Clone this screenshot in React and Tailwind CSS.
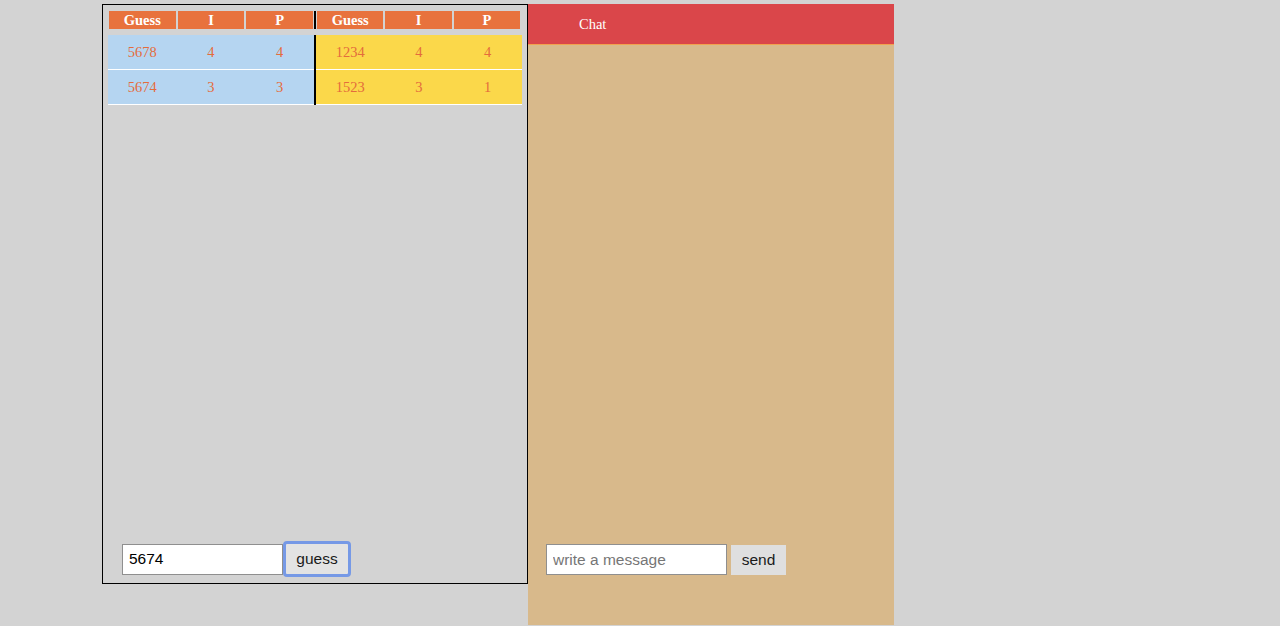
import { useState } from 'react';

const MY_GUESSES = [
  { guess: '5678', i: 4, p: 4 },
  { guess: '5674', i: 3, p: 3 },
];

const THEIR_GUESSES = [
  { guess: '1234', i: 4, p: 4 },
  { guess: '1523', i: 3, p: 1 },
];

const serif = "font-['Liberation_Serif','Times_New_Roman',serif]";
const sans = "font-['Liberation_Sans',Arial,sans-serif]";

function HeaderHalf({ className }) {
  return (
    <div className={`grid grid-cols-3 gap-[2px] ${className}`}>
      {['Guess', 'I', 'P'].map((h) => (
        <div
          key={h}
          className="bg-[#e8723d] text-white font-bold text-[14.5px] leading-[18px] text-center"
        >
          {h}
        </div>
      ))}
    </div>
  );
}

function RowsHalf({ rows, bg, className }) {
  return (
    <div className={className}>
      {rows.map((r, i) => (
        <div
          key={i}
          className={`grid grid-cols-3 h-[35px] pt-[2px] border-b border-white items-center text-center text-[14.5px] text-[#e46c3c] ${bg}`}
        >
          <span>{r.guess}</span>
          <span>{r.i}</span>
          <span>{r.p}</span>
        </div>
      ))}
    </div>
  );
}

export default function App() {
  const [guess, setGuess] = useState('5674');
  const [msg, setMsg] = useState('');

  return (
    <div className="min-h-screen bg-[#d3d3d3] flex items-start pl-[102px] pt-[4px] overflow-hidden">
      {/* game board */}
      <div className="w-[426px] h-[580px] border border-black flex flex-col px-[5px] pt-[6px]">
        <div className={serif}>
          <div className="flex h-[18px]">
            <HeaderHalf className="w-[206px] pl-[1px] pr-[1px]" />
            <div className="w-[2px] bg-black" />
            <HeaderHalf className="flex-1 pl-[1px] pr-[2px]" />
          </div>
          <div className="flex mt-[6px]">
            <RowsHalf rows={MY_GUESSES} bg="bg-[#b5d5f1]" className="w-[206px]" />
            <div className="w-[2px] bg-black" />
            <RowsHalf rows={THEIR_GUESSES} bg="bg-[#fbd84a]" className="flex-1" />
          </div>
        </div>

        <div className={`mt-auto mb-[6px] ml-[14px] flex items-center ${sans}`}>
          <input
            value={guess}
            onChange={(e) => setGuess(e.target.value)}
            className="w-[161px] shrink-0 h-[31px] border border-[#8f8f8f] bg-white px-[6px] text-[15.5px] text-black outline-none"
          />
          <button className="w-[68px] shrink-0 h-[36px] border-[3px] border-[#7699e6] rounded-[4px] bg-[#e3e3e3] text-[15.5px] text-[#1a1a1a]">
            guess
          </button>
        </div>
      </div>

      {/* chat */}
      <div className="w-[366px] h-[621px] bg-[#d8b98b] flex flex-col">
        <div className={`h-[41px] pt-[2px] bg-[#da464a] border-b border-[#f2a14e] pl-[51px] flex items-center text-white text-[14.5px] ${serif}`}>
          Chat
        </div>
        <div className={`mt-auto mb-[50px] ml-[18px] flex items-center gap-[4px] ${sans}`}>
          <input
            value={msg}
            onChange={(e) => setMsg(e.target.value)}
            placeholder="write a message"
            className="w-[181px] shrink-0 h-[31px] border border-[#8f8f8f] bg-white px-[6px] text-[15.5px] text-black placeholder:text-[#767676] outline-none"
          />
          <button className="w-[55px] shrink-0 h-[30px] bg-[#dfdfdf] text-[15.5px] text-[#1a1a1a]">
            send
          </button>
        </div>
      </div>
    </div>
  );
}
